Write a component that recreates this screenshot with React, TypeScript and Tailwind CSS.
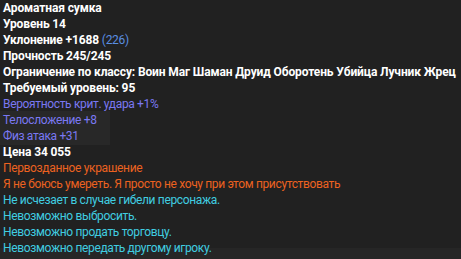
import React from "react";

const B = "font-bold text-white tracking-[-0.12px]";

const lines: { text: React.ReactNode; cls: string }[] = [
  { text: "Ароматная сумка", cls: B },
  { text: "Уровень 14", cls: B },
  {
    text: (
      <>
        Уклонение +1688 <span className="font-normal tracking-[-0.3px] text-[#5a8ee0]">(226)</span>
      </>
    ),
    cls: B,
  },
  { text: "Прочность 245/245", cls: B },
  { text: "Ограничение по классу: Воин Маг Шаман Друид Оборотень Убийца Лучник Жрец", cls: B },
  { text: "Требуемый уровень: 95", cls: B },
  { text: "Вероятность крит. удара +1%", cls: "tracking-[-0.35px] text-[#7a78f2]" },
  { text: "Телосложение +8", cls: "tracking-[-0.35px] text-[#7a78f2]" },
  { text: "Физ атака +31", cls: "tracking-[-0.35px] text-[#7a78f2]" },
  { text: "Цена 34 055", cls: B },
  { text: "Первозданное украшение", cls: "tracking-[-0.35px] text-[#ec6220]" },
  { text: "Я не боюсь умереть. Я просто не хочу при этом присутствовать", cls: "tracking-[-0.35px] text-[#ec6220]" },
  { text: "Не исчезает в случае гибели персонажа.", cls: "tracking-[-0.35px] text-[#40cde0]" },
  { text: "Невозможно выбросить.", cls: "tracking-[-0.35px] text-[#40cde0]" },
  { text: "Невозможно продать торговцу.", cls: "tracking-[-0.35px] text-[#40cde0]" },
  { text: "Невозможно передать другому игроку.", cls: "tracking-[-0.35px] text-[#40cde0]" },
];

export default function App() {
  return (
    <div
      className="relative w-[461px] h-[259px] overflow-hidden bg-[#212121] text-[12px] leading-[16px]"
      style={{ fontFamily: 'Roboto, "Noto Sans", sans-serif' }}
    >
      <div className="absolute left-0 top-[111px] w-[110px] h-[34px] bg-[#282828]" />
      <div className="absolute left-0 top-[248px] w-[461px] h-[11px] bg-[#262626]" />
      <div className="relative flex flex-col pl-[3px]">
        {lines.map((l, i) => (
          <div key={i} className={`whitespace-nowrap ${l.cls}`}>
            {l.text}
          </div>
        ))}
      </div>
    </div>
  );
}
